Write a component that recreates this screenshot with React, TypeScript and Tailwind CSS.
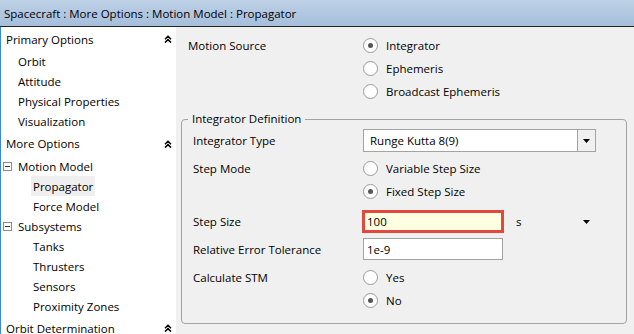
import React from "react";

function Chevrons() {
  return (
    <svg width="8" height="8" viewBox="0 0 8 8" className="block">
      <path d="M1 4.2 L4 1.2 L7 4.2 M1 7.6 L4 4.6 L7 7.6" fill="none" stroke="#000" strokeWidth="1.5" />
    </svg>
  );
}

function MinusBox() {
  return (
    <div className="w-[9px] h-[9px] border border-[#8c8c8c] bg-white flex items-center justify-center">
      <div className="w-[5px] h-px bg-[#333]" />
    </div>
  );
}

function Arrow() {
  return (
    <svg width="7" height="4" viewBox="0 0 7 4" className="block">
      <polygon points="0,0 7,0 3.5,4" fill="#000" />
    </svg>
  );
}

function Header({ label, h = "h-[24px]" }: { label: string; h?: string }) {
  return (
    <div className={`${h} flex items-center justify-between pl-[5px] pr-[4px]`}>
      <span className="pt-[1px]">{label}</span>
      <Chevrons />
    </div>
  );
}

function Item({ label }: { label: string }) {
  return <div className="h-[20px] flex items-center pl-[17px] pt-[1px]">{label}</div>;
}

function TreeNode({ label }: { label: string }) {
  return (
    <div className="h-[20px] flex items-center pl-[2px] gap-[6px]">
      <MinusBox />
      <span className="pt-[1px]">{label}</span>
    </div>
  );
}

function SubItem({ label, selected }: { label: string; selected?: boolean }) {
  return (
    <div className="h-[20px] flex items-stretch pl-[30px]">
      <div className={`flex items-center px-[2px] pt-[1px] ${selected ? "bg-[#efefef]" : ""}`}>{label}</div>
    </div>
  );
}

function Radio({ label, checked }: { label: string; checked?: boolean }) {
  return (
    <div className="h-[23px] flex items-center gap-[8px]">
      <div className="w-[15px] h-[15px] rounded-full border border-[#9a9a9a] bg-white flex items-center justify-center">
        {checked && <div className="w-[5px] h-[5px] rounded-full bg-[#555]" />}
      </div>
      <span className="pt-[1px]">{label}</span>
    </div>
  );
}

export default function App() {
  return (
    <div className="w-[634px] h-[334px] overflow-hidden flex flex-col font-['Open_Sans',sans-serif] text-[11.5px] text-black bg-[#f0f0f0]">
      <div className="h-[27px] shrink-0 flex items-center pl-[4px] pt-[1px] bg-gradient-to-b from-[#bed1e6] to-[#a5bedb] border-b border-[#222]">
        Spacecraft : More Options : Motion Model : Propagator
      </div>
      <div className="flex flex-1 min-h-0">
        <div className="w-[176px] shrink-0 bg-white border-l border-[#3c88d8]">
          <Header label="Primary Options" />
          <Item label="Orbit" />
          <Item label="Attitude" />
          <Item label="Physical Properties" />
          <Item label="Visualization" />
          <Header label="More Options" h="h-[25px]" />
          <TreeNode label="Motion Model" />
          <SubItem label="Propagator" selected />
          <SubItem label="Force Model" />
          <TreeNode label="Subsystems" />
          <SubItem label="Tanks" />
          <SubItem label="Thrusters" />
          <SubItem label="Sensors" />
          <SubItem label="Proximity Zones" />
          <Header label="Orbit Determination" />
        </div>
        <div className="flex-1 pt-[7px]">
          <div className="flex pl-[12px]">
            <div className="w-[175px] h-[23px] flex items-center pt-[1px]">Motion Source</div>
            <div className="flex flex-col">
              <Radio label="Integrator" checked />
              <Radio label="Ephemeris" />
              <Radio label="Broadcast Ephemeris" />
            </div>
          </div>
          <fieldset className="mt-[8px] ml-[5px] mr-[7px] border border-[#a3a3a3] rounded-[4px] px-[6px] pb-[11px]">
            <legend className="px-[4px] leading-[16px]">Integrator Definition</legend>
            <div className="pl-[5px] flex flex-col">
              <div className="flex mt-[2px]">
                <div className="w-[170px] h-[23px] flex items-center pt-[1px]">Integrator Type</div>
                <div className="w-[233px] h-[23px] border border-[#a3a3a3] bg-white flex">
                  <div className="flex-1 flex items-center pl-[6px] pt-[1px]">Runge Kutta 8(9)</div>
                  <div className="w-[18px] border-l border-[#a3a3a3] bg-[#f0f0f0] flex items-center justify-center">
                    <Arrow />
                  </div>
                </div>
              </div>
              <div className="flex mt-[5px]">
                <div className="w-[170px] h-[23px] flex items-center pt-[1px]">Step Mode</div>
                <div className="flex flex-col">
                  <Radio label="Variable Step Size" />
                  <Radio label="Fixed Step Size" checked />
                </div>
              </div>
              <div className="flex mt-[7px]">
                <div className="w-[169px] h-[23px] flex items-center pt-[1px]">Step Size</div>
                <div className="w-[142px] h-[23px] border-[3px] border-[#e2483e] bg-[#ffffe1] flex items-center pl-[2px] pt-[1px]">100</div>
                <div className="w-[93px] h-[23px] flex items-center justify-between pl-[12px] pr-[7px]">
                  <span className="pt-[1px]">s</span>
                  <Arrow />
                </div>
              </div>
              <div className="flex mt-[5px]">
                <div className="w-[170px] h-[22px] flex items-center pt-[1px]">Relative Error Tolerance</div>
                <div className="w-[140px] h-[22px] border border-[#a3a3a3] bg-white flex items-center pl-[3px] pt-[1px]">1e-9</div>
              </div>
              <div className="flex mt-[6px]">
                <div className="w-[170px] h-[23px] flex items-center pt-[1px]">Calculate STM</div>
                <div className="flex flex-col">
                  <Radio label="Yes" />
                  <Radio label="No" checked />
                </div>
              </div>
            </div>
          </fieldset>
        </div>
      </div>
    </div>
  );
}
